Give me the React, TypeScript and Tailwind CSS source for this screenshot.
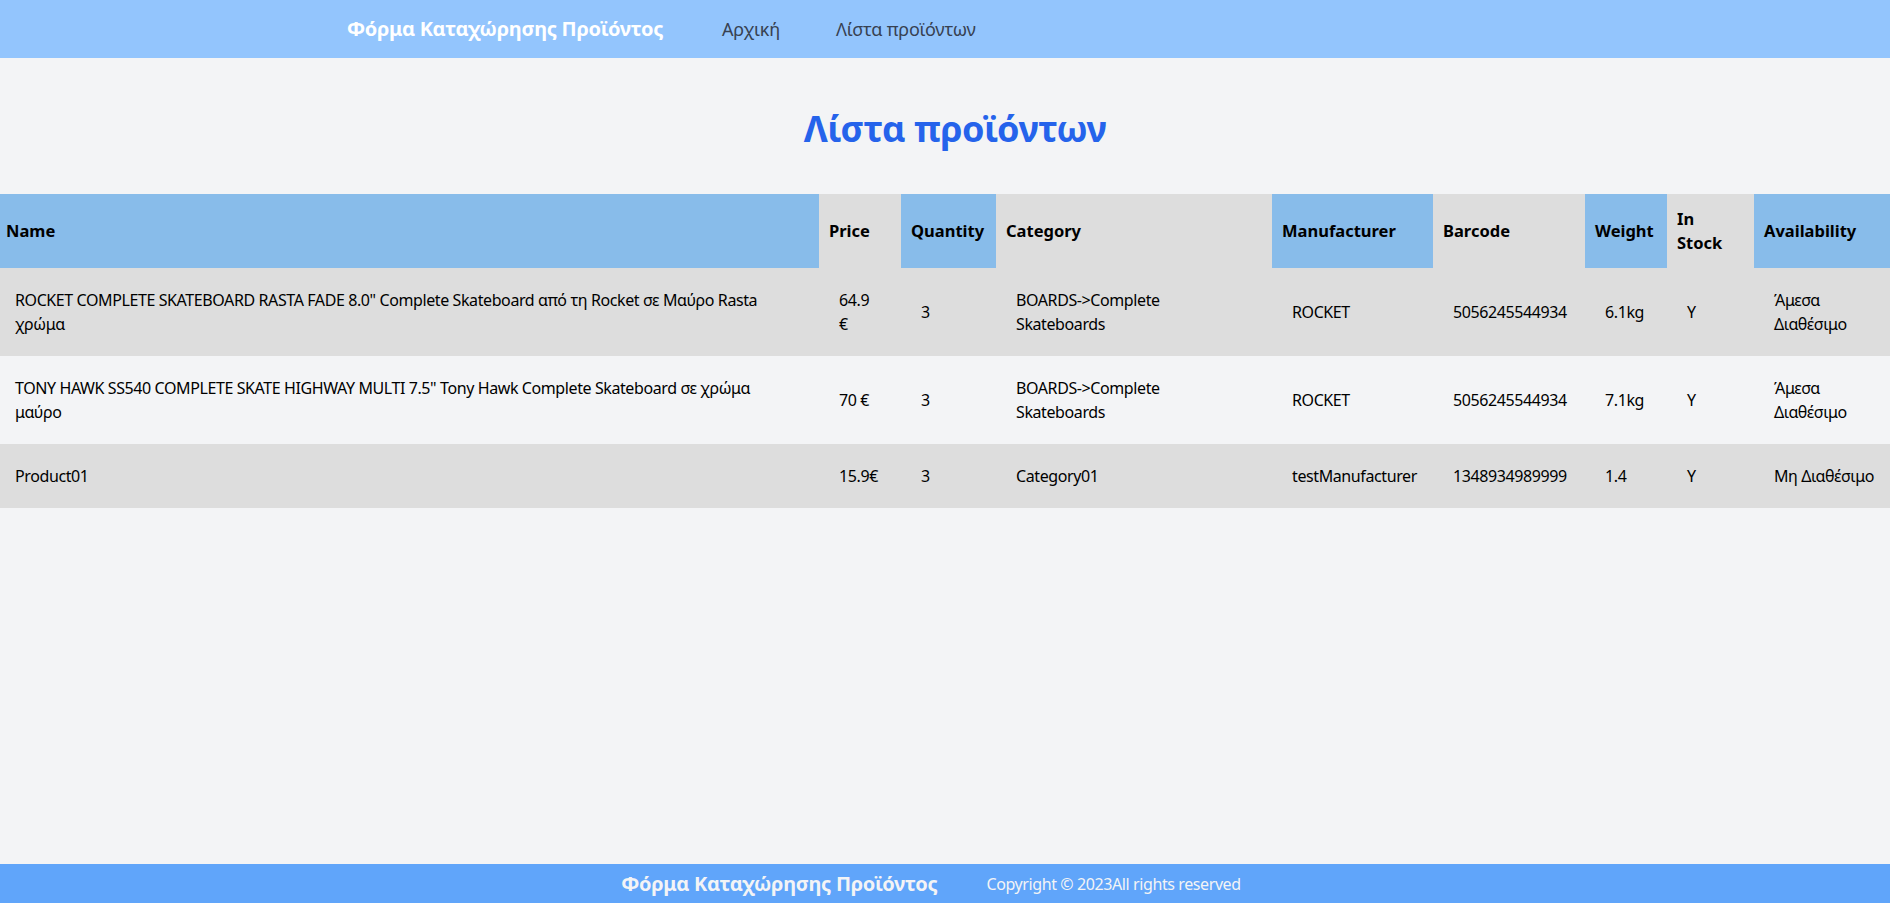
import React from "react";

type Product = {
  name: string;
  price: string;
  quantity: string;
  category: string;
  manufacturer: string;
  barcode: string;
  weight: string;
  inStock: string;
  availability: string;
};

const products: Product[] = [
  {
    name: 'ROCKET COMPLETE SKATEBOARD RASTA FADE 8.0" Complete Skateboard από τη Rocket σε Μαύρο Rasta χρώμα',
    price: "64.9 €",
    quantity: "3",
    category: "BOARDS->Complete Skateboards",
    manufacturer: "ROCKET",
    barcode: "5056245544934",
    weight: "6.1kg",
    inStock: "Y",
    availability: "Άμεσα Διαθέσιμο",
  },
  {
    name: 'TONY HAWK SS540 COMPLETE SKATE HIGHWAY MULTI 7.5" Tony Hawk Complete Skateboard σε χρώμα μαύρο',
    price: "70 €",
    quantity: "3",
    category: "BOARDS->Complete Skateboards",
    manufacturer: "ROCKET",
    barcode: "5056245544934",
    weight: "7.1kg",
    inStock: "Y",
    availability: "Άμεσα Διαθέσιμο",
  },
  {
    name: "Product01",
    price: "15.9€",
    quantity: "3",
    category: "Category01",
    manufacturer: "testManufacturer",
    barcode: "1348934989999",
    weight: "1.4",
    inStock: "Y",
    availability: "Μη Διαθέσιμο",
  },
];

const blue = "bg-[#88bcea]";
const grey = "bg-[#dddddd]";

const App = () => {
  return (
    <div className="min-h-screen flex flex-col bg-[#f3f4f6] text-black font-['Noto_Sans',sans-serif]">
      {/* navbar */}
      <nav className="h-[58px] bg-[#93c5fd] flex items-center pl-[347px]">
        <a href="#" className="w-[375px] text-xl font-bold text-white tracking-[-0.3px]">
          Φόρμα Καταχώρησης Προϊόντος
        </a>
        <ul className="flex items-center gap-[56px] text-lg text-[#374151] tracking-[-0.2px]">
          <li>
            <a href="#">Αρχική</a>
          </li>
          <li>
            <a href="#">Λίστα προϊόντων</a>
          </li>
        </ul>
      </nav>

      <main className="flex-1">
        <h1 className="mt-[51px] mb-[45px] pl-5 text-center text-4xl font-bold text-[#2563eb] tracking-[-0.5px]">
          Λίστα προϊόντων
        </h1>

        <table className="w-full table-fixed border-collapse text-base">
          <colgroup>
            <col className="w-[819px]" />
            <col className="w-[82px]" />
            <col className="w-[95px]" />
            <col className="w-[276px]" />
            <col className="w-[161px]" />
            <col className="w-[152px]" />
            <col className="w-[82px]" />
            <col className="w-[87px]" />
            <col className="w-[136px]" />
          </colgroup>
          <thead>
            <tr className="text-left font-bold text-[16.5px] leading-6">
              <th className={`${blue} py-[13px] pl-[6px] pr-2.5`}>Name</th>
              <th className={`${grey} py-[13px] px-2.5`}>Price</th>
              <th className={`${blue} py-[13px] px-2.5`}>Quantity</th>
              <th className={`${grey} py-[13px] px-2.5`}>Category</th>
              <th className={`${blue} py-[13px] px-2.5`}>Manufacturer</th>
              <th className={`${grey} py-[13px] px-2.5`}>Barcode</th>
              <th className={`${blue} py-[13px] px-2.5`}>Weight</th>
              <th className={`${grey} py-[13px] px-2.5`}>
                <span className="block w-min">In Stock</span>
              </th>
              <th className={`${blue} py-[13px] px-2.5`}>Availability</th>
            </tr>
          </thead>
          <tbody className="tracking-[-0.4px]">
            {products.map((p, i) => (
              <tr key={i} className={i % 2 === 0 ? grey : "bg-[#f3f4f6]"}>
                <td className="py-5 pl-[15px] pr-5">{p.name}</td>
                <td className="py-5 px-5">{p.price}</td>
                <td className="py-5 px-5">{p.quantity}</td>
                <td className="py-5 pl-5 pr-6">{p.category}</td>
                <td className="py-5 px-5">{p.manufacturer}</td>
                <td className="py-5 px-5">{p.barcode}</td>
                <td className="py-5 px-5">{p.weight}</td>
                <td className="py-5 px-5">{p.inStock}</td>
                <td className="py-5 pl-5 pr-2">{p.availability}</td>
              </tr>
            ))}
          </tbody>
        </table>
      </main>

      {/* footer */}
      <footer className="h-[39px] bg-[#60a5fa] flex items-center justify-center gap-[49px] pr-[28px]">
        <span className="text-xl font-bold text-[#f3f4f6] tracking-[-0.3px]">Φόρμα Καταχώρησης Προϊόντος</span>
        <span className="text-[#f3f4f6] tracking-[-0.4px]">Copyright © 2023All rights reserved</span>
      </footer>
    </div>
  );
};

export default App;
